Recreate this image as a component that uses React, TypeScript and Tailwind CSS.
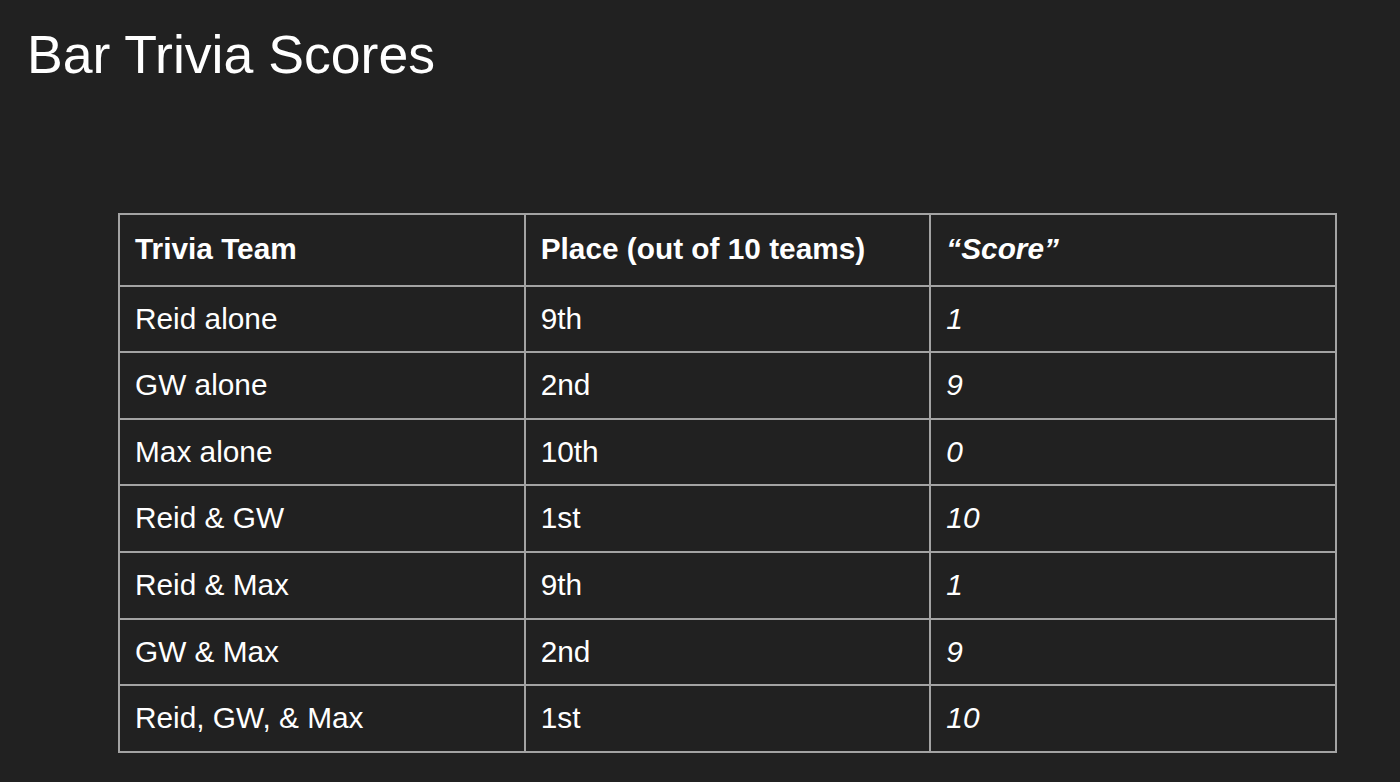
import React from "react";

const rows = [
  ["Reid alone", "9th", "1"],
  ["GW alone", "2nd", "9"],
  ["Max alone", "10th", "0"],
  ["Reid & GW", "1st", "10"],
  ["Reid & Max", "9th", "1"],
  ["GW & Max", "2nd", "9"],
  ["Reid, GW, & Max", "1st", "10"],
];

const cell = "flex items-center pl-[15px] border-r-2 border-b-2 border-[#a3a3a3]";

export default function App() {
  return (
    <div
      className="w-full h-screen bg-[#212121] text-white overflow-hidden"
      style={{ fontFamily: '"Liberation Sans", Arial, sans-serif' }}
    >
      <h1 className="pt-[28px] pl-[27px] text-[53.6px] leading-none font-normal">Bar Trivia Scores</h1>

      <div className="mt-[131px] ml-[118px] w-[1219px] grid grid-cols-3 border-t-2 border-l-2 border-[#a3a3a3] text-[29.8px]">
        {/* header */}
        <div className={`${cell} h-[72px] font-bold`}>Trivia Team</div>
        <div className={`${cell} h-[72px] font-bold`}>Place (out of 10 teams)</div>
        <div className={`${cell} h-[72px] font-bold italic`}>“Score”</div>

        {rows.map(([team, place, score]) => (
          <React.Fragment key={team}>
            <div className={`${cell} h-[66.6px]`}>{team}</div>
            <div className={`${cell} h-[66.6px]`}>{place}</div>
            <div className={`${cell} h-[66.6px] italic`}>{score}</div>
          </React.Fragment>
        ))}
      </div>
    </div>
  );
}
